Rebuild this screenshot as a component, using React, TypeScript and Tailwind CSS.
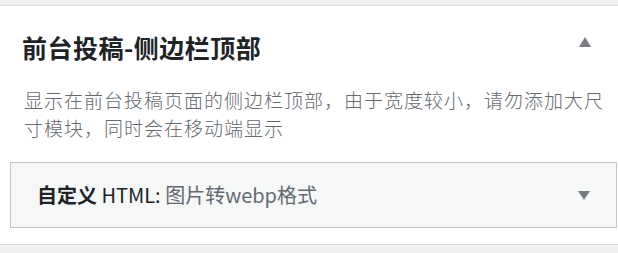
import React from "react";

export default function App() {
  const font = { fontFamily: '"Noto Sans CJK SC", "Noto Sans", sans-serif' };
  return (
    <div className="w-[618px] h-[253px] bg-[#f0f0f1] overflow-hidden" style={font}>
      <div className="h-[5px]" />
      <div className="bg-white border-y border-[#dcdcde]">
        <div className="flex items-center justify-between pl-[22px] pr-[27px] pt-[26px]">
          <h2 className="text-[25px] leading-[30px] font-bold tracking-[0.5px] text-[#1d2327]">
            前台投稿-侧边栏顶部
          </h2>
          <svg width="12" height="10" viewBox="0 0 12 10" className="mt-[-10px]">
            <polygon points="6,0 12,10 0,10" fill="#787c82" />
          </svg>
        </div>
        <p className="mt-[24px] pl-[24px] pr-[12px] text-[19px] leading-[28px] tracking-[1px] font-light text-[#646970]">
          显示在前台投稿页面的侧边栏顶部，由于宽度较小，请勿添加大尺寸模块，同时会在移动端显示
        </p>
        <div className="mt-[20px] mb-[16px] ml-[10px] mr-[1px] h-[66px] border border-[#c3c4c7] bg-[#f6f7f7] flex items-center justify-between pl-[26px] pr-[26px]">
          <div className="text-[20px] leading-[26px] text-[#1d2327]">
            <span className="font-bold">自定义</span>
            <span className="font-normal"> HTML: </span>
            <span className="text-[#646970] font-normal">图片转webp格式</span>
          </div>
          <svg width="12" height="9" viewBox="0 0 12 9">
            <polygon points="0,0 12,0 6,9" fill="#787c82" />
          </svg>
        </div>
      </div>
    </div>
  );
}
